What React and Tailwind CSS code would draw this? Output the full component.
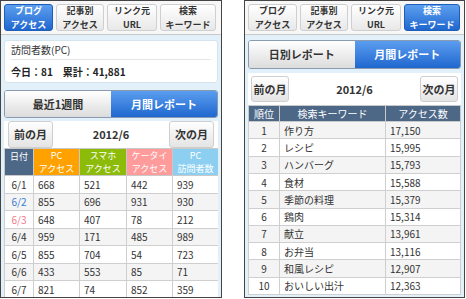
import React from "react";

const font = { fontFamily: '"Noto Sans CJK JP", "Noto Sans", sans-serif' };

function Tab({ l1, l2, active, w }) {
  return (
    <div
      className={
        "flex flex-col items-center justify-center rounded-[3px] border h-[27px] text-[9px] font-bold " +
        w +
        (active
          ? " border-[#1d5fb8] bg-gradient-to-b from-[#5c9ff0] to-[#1f67cf] text-white"
          : " border-[#cfcfcf] bg-gradient-to-b from-white to-[#e8e8e8] text-[#333]")
      }
    >
      <span className="block leading-[13.1px] shrink-0">{l1}</span>
      <span className="block leading-[13.1px] shrink-0">{l2}</span>
    </div>
  );
}

function Nav({ active }) {
  const tabs = [
    ["ブログ", "アクセス", "w-[49px]"],
    ["記事別", "アクセス", "w-[48px]"],
    ["リンク元", "URL", "w-[50px]"],
    ["検索", "キーワード", "w-[56px]"],
  ];
  return (
    <div className="h-[34px] border-b border-[#c9c9c9] bg-[#f7f7f7] flex items-start gap-[3px] pt-[3px] pl-[3px]">
      {tabs.map((t, i) => (
        <Tab key={i} l1={t[0]} l2={t[1]} w={t[2]} active={i === active} />
      ))}
    </div>
  );
}

function Segmented({ left, right, h }) {
  return (
    <div className={"flex rounded-[3px] border border-[#8a9bb0] overflow-hidden text-[11px] font-bold " + h}>
      <div className="flex-1 flex items-center justify-center bg-gradient-to-b from-white to-[#dcdcdc] text-[#333]">
        {left}
      </div>
      <div className="flex-1 flex items-center justify-center bg-gradient-to-b from-[#5a9def] to-[#1f67cf] text-white">
        {right}
      </div>
    </div>
  );
}

function MonthBtn({ label, cls }) {
  return (
    <div
      className={
        "flex items-center justify-center rounded-[3px] border border-[#cfcfcf] bg-gradient-to-b from-white to-[#e4e4e4] text-[11px] font-bold text-[#333] " +
        cls
      }
    >
      {label}
    </div>
  );
}

const daily = [
  ["6/1", "668", "521", "442", "939", ""],
  ["6/2", "855", "696", "931", "930", "text-[#3a7bd5]"],
  ["6/3", "648", "407", "78", "212", "text-[#f07a88]"],
  ["6/4", "959", "171", "485", "989", ""],
  ["6/5", "855", "704", "54", "723", ""],
  ["6/6", "433", "553", "85", "71", ""],
  ["6/7", "821", "74", "852", "359", ""],
];

const keywords = [
  ["1", "作り方", "17,150"],
  ["2", "レシピ", "15,995"],
  ["3", "ハンバーグ", "15,793"],
  ["4", "食材", "15,588"],
  ["5", "季節の料理", "15,379"],
  ["6", "鶏肉", "15,314"],
  ["7", "献立", "13,961"],
  ["8", "お弁当", "13,116"],
  ["9", "和風レシピ", "12,907"],
  ["10", "おいしい出汁", "12,363"],
];

function HeadCell({ bg, l1, l2 }) {
  return (
    <th className={"font-normal border border-[#c9c9c9] p-0 " + bg}>
      <div className="flex flex-col items-center text-[9px]">
        <span className="block leading-[13.1px]">{l1}</span>
        <span className="block leading-[13.1px]">{l2}</span>
      </div>
    </th>
  );
}

function LeftPanel() {
  return (
    <div className="w-[222px] h-[298px] border border-[#444] bg-[#e2f0fa] flex flex-col overflow-hidden">
      <Nav active={0} />
      <div className="px-[3px] pt-[5px] flex flex-col flex-1 min-h-0">
        <div className="h-[43px] bg-white rounded-[3px] border border-[#d6e4ee] px-[6px] flex flex-col">
          <div className="h-[19px] flex items-end pb-[2px] text-[10px] text-[#333] border-b border-[#e6e6e6]">
            訪問者数(PC)
          </div>
          <div className="flex-1 flex items-center text-[10px] font-bold text-[#222]">
            今日：81　累計：41,881
          </div>
        </div>
        <div className="mt-[7px]">
          <Segmented left="最近1週間" right="月間レポート" h="h-[28px]" />
        </div>
        <div className="mt-[3px] bg-white flex-1 min-h-0 flex flex-col overflow-hidden">
          <div className="h-[35px] flex items-center justify-between px-[4px]">
            <MonthBtn label="前の月" cls="w-[45px] h-[27px]" />
            <span className="text-[11px] font-bold text-[#333]">2012/6</span>
            <MonthBtn label="次の月" cls="w-[45px] h-[27px]" />
          </div>
          <table className="w-full border-collapse text-[10px] table-fixed">
            <colgroup>
              <col className="w-[29px]" />
              <col className="w-[46px]" />
              <col className="w-[47px]" />
              <col className="w-[46px]" />
              <col className="w-[46px]" />
            </colgroup>
            <thead>
              <tr className="h-[27px] text-white">
                <th className="bg-[#4d6787] font-normal align-top pt-[1px] border border-[#c9c9c9] text-[9px] leading-[13px]">日付</th>
                <HeadCell bg="bg-[#ffa200]" l1="PC" l2="アクセス" />
                <HeadCell bg="bg-[#8cbb0a]" l1="スマホ" l2="アクセス" />
                <HeadCell bg="bg-[#ff9b9b]" l1="ケータイ" l2="アクセス" />
                <HeadCell bg="bg-[#8dcff1]" l1="PC" l2="訪問者数" />
              </tr>
            </thead>
            <tbody>
              {daily.map((r, i) => (
                <tr key={i} className={"h-[17.5px] text-[#333] " + (i % 2 === 1 ? "bg-[#f4f4f4]" : "bg-white")}>
                  <td className={"text-center border border-[#cfcfcf] " + r[5]}>{r[0]}</td>
                  <td className="pl-[4px] border border-[#cfcfcf]">{r[1]}</td>
                  <td className="pl-[4px] border border-[#cfcfcf]">{r[2]}</td>
                  <td className="pl-[4px] border border-[#cfcfcf]">{r[3]}</td>
                  <td className="pl-[4px] border border-[#cfcfcf]">{r[4]}</td>
                </tr>
              ))}
            </tbody>
          </table>
        </div>
      </div>
    </div>
  );
}

function RightPanel() {
  return (
    <div className="w-[221px] h-[298px] border border-[#444] bg-[#e2f0fa] flex flex-col overflow-hidden">
      <Nav active={3} />
      <div className="px-[3px] pt-[5px] pb-[2px] flex flex-col flex-1 min-h-0">
        <Segmented left="日別レポート" right="月間レポート" h="h-[29px]" />
        <div className="mt-[4px] bg-white flex-1 min-h-0 flex flex-col">
          <div className="h-[33px] flex items-center justify-between px-[3px]">
            <MonthBtn label="前の月" cls="w-[38px] h-[26px]" />
            <span className="text-[11px] font-bold text-[#333]">2012/6</span>
            <MonthBtn label="次の月" cls="w-[38px] h-[26px]" />
          </div>
          <table className="w-full border-collapse text-[10px] table-fixed">
            <colgroup>
              <col className="w-[31px]" />
              <col className="w-[106px]" />
              <col />
            </colgroup>
            <thead>
              <tr className="h-[15px] text-white bg-[#4d6787]">
                <th className="font-normal border border-[#c9c9c9]">順位</th>
                <th className="font-normal border border-[#c9c9c9]">検索キーワード</th>
                <th className="font-normal border border-[#c9c9c9]">アクセス数</th>
              </tr>
            </thead>
            <tbody>
              {keywords.map((r, i) => (
                <tr key={i} className={"h-[17.3px] text-[#333] " + (i % 2 === 0 ? "bg-[#f4f4f4]" : "bg-white")}>
                  <td className="text-center border border-[#cfcfcf]">{r[0]}</td>
                  <td className="pl-[4px] border border-[#cfcfcf]">{r[1]}</td>
                  <td className="pl-[4px] border border-[#cfcfcf]">{r[2]}</td>
                </tr>
              ))}
            </tbody>
          </table>
        </div>
      </div>
    </div>
  );
}

export default function App() {
  return (
    <div className="w-[466px] h-[299px] bg-white flex gap-[22px]" style={font}>
      <LeftPanel />
      <RightPanel />
    </div>
  );
}
